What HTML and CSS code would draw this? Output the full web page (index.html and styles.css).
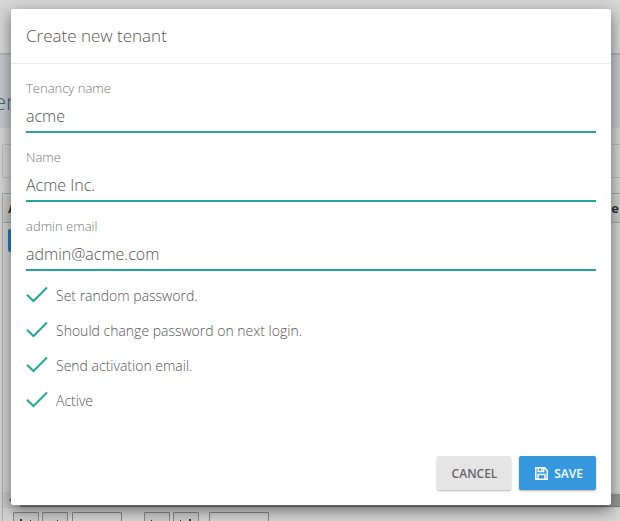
FILE: index.html
```html
<!DOCTYPE html>
<html lang="en">
<head>
<meta charset="utf-8">
<title>Create new tenant</title>
<link rel="stylesheet" href="styles.css">
</head>
<body>
<div class="page">
  <header class="topbar"></header>
  <div class="band"><span class="page-title">er</span></div>
  <div class="filter"></div>
  <div class="table">
    <div class="thead"><span>A</span><span>e</span></div>
    <div class="tbody"><div class="action"></div></div>
    <div class="scroll"><span class="arrow"></span><span class="thumb"></span></div>
    <div class="pager">
      <span class="pg"><svg viewBox="0 0 26 9"><path d="M7 7h2v2h-2zM17 8h1v1h-1z"/></svg></span>
      <span class="pg"><svg viewBox="0 0 26 9"><path d="M15 8h1v1h-1z"/></svg></span>
      <span class="pg size"></span>
      <span class="pg next"><svg viewBox="0 0 26 9"><path d="M7 8h1v1h-1z"/></svg></span>
      <span class="pg"><svg viewBox="0 0 26 9"><path d="M7 8h1v1h-1zM16 7h2v2h-2z"/></svg></span>
      <span class="pg wide"></span>
    </div>
  </div>
</div>
<div class="modal">
  <div class="modal-header">Create new tenant</div>
  <div class="modal-body">
    <div class="field"><div class="label">Tenancy name</div><div class="value">acme</div></div>
    <div class="field"><div class="label">Name</div><div class="value">Acme Inc.</div></div>
    <div class="field"><div class="label">admin email</div><div class="value">admin@acme.com</div></div>
    <div class="checks">
      <div class="check"><svg viewBox="0 0 24 20"><path d="M1 8.7 7.5 15 21 1.5"/></svg><span>Set random password.</span></div>
      <div class="check"><svg viewBox="0 0 24 20"><path d="M1 8.7 7.5 15 21 1.5"/></svg><span>Should change password on next login.</span></div>
      <div class="check"><svg viewBox="0 0 24 20"><path d="M1 8.7 7.5 15 21 1.5"/></svg><span>Send activation email.</span></div>
      <div class="check"><svg viewBox="0 0 24 20"><path d="M1 8.7 7.5 15 21 1.5"/></svg><span>Active</span></div>
    </div>
  </div>
  <div class="modal-footer">
    <div class="btn cancel"><span>CANCEL</span></div>
    <div class="btn save"><svg viewBox="0 0 13 13"><path d="M.8.8h8.7l2.7 2.7v8.7H.8zM3.3.8v3.7h5.4V.8M3 12.2V7.5h7v4.7M6.9 1.5v2"/></svg><span>SAVE</span></div>
  </div>
</div>
</body>
</html>
```

FILE: styles.css
```css
* { box-sizing: border-box; }
body {
  margin: 0;
  height: 521px;
  overflow: hidden;
  background: #d4d4d4;
  font-family: "Open Sans", sans-serif;
}
.page { height: 521px; overflow: hidden; }
.topbar { height: 55px; background: #d6d6d6; border-bottom: 2px solid #b3b4b9; }
.band { height: 73px; background: #c9cad0; padding-top: 31px; }
.page-title {
  display: block;
  margin-left: -6px;
  font-size: 22px;
  line-height: 30px;
  font-weight: 300;
  color: #3d6680;
}
.filter { height: 34px; margin: 16px -10px 0 2px; border: 1px solid #bcbcbc; border-radius: 2px; }
.table { margin: 15px -10px 0 2px; border-left: 1px solid #aaa; border-top: 1px solid #aaa; }
.thead {
  height: 29px;
  display: flex;
  justify-content: space-between;
  padding: 0 11px 0 5px;
  border-bottom: 1px solid #aaa;
  background: linear-gradient(#d4d4d4, #c8c8c8);
  font-size: 13px;
  line-height: 28px;
  font-weight: 700;
  color: #333;
}
.tbody { height: 269px; padding: 6px 5px; }
.action { width: 50px; height: 23px; background: #2d7db8; border-radius: 2px; }
.scroll { height: 16px; display: flex; align-items: center; background: #c9c9c9; }
.arrow { margin-left: 6px; border: 2px solid transparent; border-right-color: #666; border-left: 0; }
.thumb { height: 13px; margin: 1px 0 0 9px; flex: 1; background: #989898; border-bottom: 1px solid #808080; }
.pager { display: flex; gap: 3px; padding: 4px 10px; }
.pg { width: 26px; height: 26px; border: 1px solid #858585; background: #cbcbcb; border-radius: 1px; }
.pg svg { display: block; width: 26px; height: 9px; margin: -1px; fill: #333; }
.pg.size { width: 50px; margin-left: 1px; background: #d4d4d4; }
.pg.next { margin-left: 19px; }
.pg.wide { width: 60px; margin-left: 7px; background: #d4d4d4; }

.modal {
  position: absolute;
  left: 11px;
  top: 9px;
  width: 600px;
  height: 496px;
  display: flex;
  flex-direction: column;
  background: #fff;
  border-radius: 2px;
  box-shadow: 0 5px 15px rgba(0, 0, 0, .5);
  color: #555;
}
.modal-header {
  height: 55px;
  padding: 0 15px;
  border-bottom: 1px solid #e9e9e9;
  font-size: 17px;
  line-height: 53px;
  font-weight: 300;
}
.modal-body { flex: 1; padding: 15px 15px 0; font-weight: 300; }
.field { height: 54px; margin-bottom: 15px; border-bottom: 2px solid #26a69a; }
.label { height: 19px; font-size: 13px; line-height: 19px; color: #777; }
.value { height: 33px; font-size: 16px; line-height: 36px; }
.checks { margin-top: -8px; }
.check { height: 35px; display: flex; align-items: center; font-size: 14px; }
.check svg { width: 24px; height: 20px; margin-right: 6px; fill: none; stroke: #26a69a; stroke-width: 2; }
.modal-footer { display: flex; justify-content: flex-end; gap: 8px; padding: 0 15px 15px; }
.btn {
  height: 34px;
  display: flex;
  align-items: center;
  justify-content: center;
  border-radius: 2px;
  box-shadow: 0 1px 2px rgba(0, 0, 0, .3);
  font-size: 12px;
  font-weight: 600;
}
.cancel { width: 74px; padding-left: 1px; background: #e5e5e5; color: #666; }
.save { width: 77px; padding-left: 3px; gap: 6px; background: #3598dc; color: #fff; }
.save svg { width: 13px; height: 13px; fill: none; stroke: #fff; stroke-width: 1.4; }
```
